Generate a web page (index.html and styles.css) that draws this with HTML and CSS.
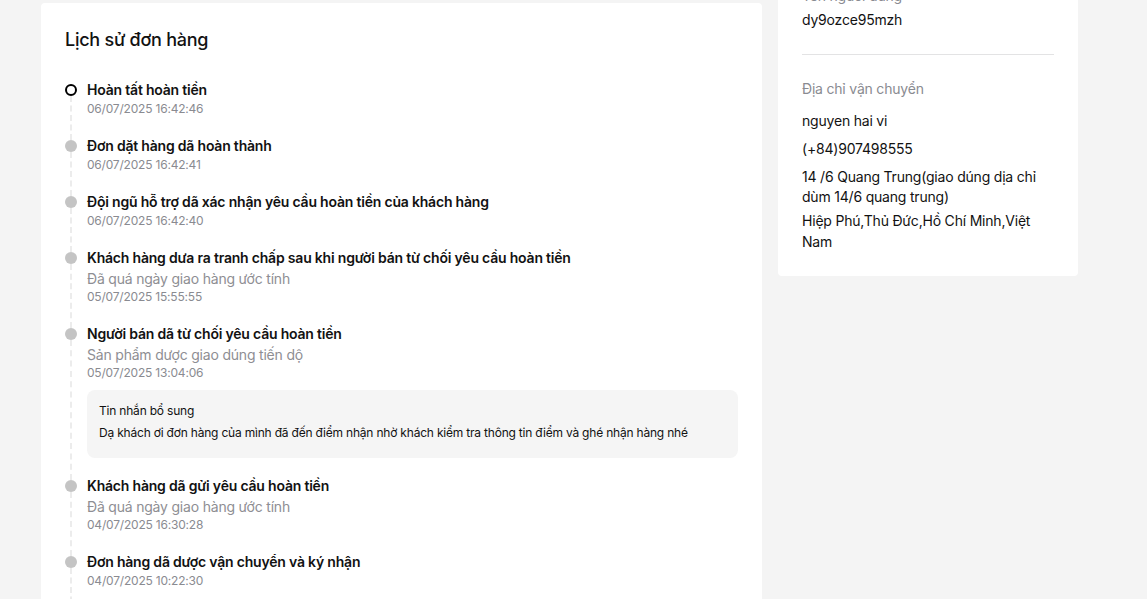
FILE: index.html
```html
<!DOCTYPE html>
<html lang="vi">
<head>
<meta charset="utf-8">
<title>Lịch sử đơn hàng</title>
<link rel="stylesheet" href="styles.css">
</head>
<body>
<div class="page">
  <section class="card history">
    <h2 class="history-title">Lịch sử đơn hàng</h2>
    <ol class="timeline">
      <li class="event current">
        <span class="dot"></span>
        <div class="event-title">Hoàn tất hoàn tiền</div>
        <div class="event-time">06/07/2025 16:42:46</div>
      </li>
      <li class="event">
        <span class="dot"></span>
        <div class="event-title">Đơn dặt hàng dã hoàn thành</div>
        <div class="event-time">06/07/2025 16:42:41</div>
      </li>
      <li class="event">
        <span class="dot"></span>
        <div class="event-title">Đội ngũ hỗ trợ dã xác nhận yêu cầu hoàn tiền của khách hàng</div>
        <div class="event-time">06/07/2025 16:42:40</div>
      </li>
      <li class="event">
        <span class="dot"></span>
        <div class="event-title">Khách hàng dưa ra tranh chấp sau khi người bán từ chối yêu cầu hoàn tiền</div>
        <div class="event-desc">Đã quá ngày giao hàng ước tính</div>
        <div class="event-time">05/07/2025 15:55:55</div>
      </li>
      <li class="event">
        <span class="dot"></span>
        <div class="event-title">Người bán dã từ chối yêu cầu hoàn tiền</div>
        <div class="event-desc">Sản phẩm dược giao dúng tiến dộ</div>
        <div class="event-time">05/07/2025 13:04:06</div>
        <div class="note">
          <p class="note-label">Tin nhắn bổ sung</p>
          <p class="note-text">Dạ khách ơi đơn hàng của mình đã đến điểm nhận nhờ khách kiểm tra thông tin điểm và ghé nhận hàng nhé</p>
        </div>
      </li>
      <li class="event">
        <span class="dot"></span>
        <div class="event-title">Khách hàng dã gửi yêu cầu hoàn tiền</div>
        <div class="event-desc">Đã quá ngày giao hàng ước tính</div>
        <div class="event-time">04/07/2025 16:30:28</div>
      </li>
      <li class="event">
        <span class="dot"></span>
        <div class="event-title">Đơn hàng dã dược vận chuyển và ký nhận</div>
        <div class="event-time">04/07/2025 10:22:30</div>
      </li>
      <li class="event">
        <span class="dot"></span>
        <div class="event-title">Đơn hàng dã dược giao cho dơn vị vận chuyển</div>
        <div class="event-time">03/07/2025 09:15:12</div>
      </li>
    </ol>
  </section>

  <aside class="card customer">
    <h3 class="customer-title">Thông tin khách hàng</h3>
    <div class="field">
      <div class="label">Tên người dùng</div>
      <div class="value">dy9ozce95mzh</div>
    </div>
    <hr class="divider">
    <div class="field address">
      <div class="label">Địa chỉ vận chuyển</div>
      <div class="value first">nguyen hai vi</div>
      <div class="value">(+84)907498555</div>
      <div class="value">14 /6 Quang Trung(giao dúng dịa chỉ dùm 14/6 quang trung)</div>
      <div class="value tight">Hiệp Phú,Thủ Đức,Hồ Chí Minh,Việt Nam</div>
    </div>
  </aside>
</div>
</body>
</html>
```

FILE: styles.css
```css
* { box-sizing: border-box; }

html, body {
  margin: 0;
  padding: 0;
  background: #f4f4f4;
  font-family: "Inter", "Noto Sans", sans-serif;
  letter-spacing: -0.2px;
  color: #121212;
  overflow: hidden;
}

.page {
  display: flex;
  align-items: flex-start;
  gap: 16px;
  padding: 3px 0 0 41px;
}

.card {
  background: #fff;
  border-radius: 4px;
}

/* ---------- history ---------- */
.history {
  width: 721px;
  padding: 24px;
}

.history-title {
  margin: 0 0 27px;
  font-size: 18px;
  line-height: 26px;
  font-weight: 500;
  letter-spacing: -0.25px;
}

.timeline {
  list-style: none;
  margin: 0;
  padding: 0;
}

.event {
  position: relative;
  padding-left: 22px;
  padding-bottom: 18px;
}

.event::before {
  content: "";
  position: absolute;
  left: 5px;
  top: 16px;
  bottom: -4px;
  border-left: 2px dashed #ececec;
}

.dot {
  position: absolute;
  left: 0;
  top: 4px;
  width: 12px;
  height: 12px;
  border-radius: 50%;
  background: #c4c4c4;
  z-index: 1;
}

.current .dot {
  background: #fff;
  border: 2px solid #000;
}

.event-title {
  font-size: 14px;
  line-height: 20px;
  font-weight: 600;
}

.event-desc {
  font-size: 14px;
  line-height: 20px;
  margin-top: 1px;
  margin-bottom: -1px;
  color: #8e8e93;
}

.event-time {
  font-size: 12px;
  line-height: 18px;
  color: #8a8b91;
}

.note {
  margin-top: 8px;
  background: #f5f5f5;
  border-radius: 8px;
  padding: 12px 12px 16px;
}

.note p {
  margin: 0;
  font-size: 12px;
  line-height: 18px;
  color: #121212;
}

.note-label { margin-bottom: 4px !important; }

/* ---------- customer ---------- */
.customer {
  width: 300px;
  margin-top: -81px;
  padding: 24px;
}

.customer-title {
  margin: 0 0 16px;
  font-size: 16px;
  line-height: 24px;
  font-weight: 600;
}

.label {
  font-size: 14px;
  line-height: 20px;
  color: #8a8b91;
}

.value {
  font-size: 14px;
  line-height: 20px;
  margin-top: 4px;
}

.address .value { margin-top: 8px; }
.address .value.first { margin-top: 12px; }
.address .value.tight { margin-top: 3px; line-height: 21px; }

.divider {
  margin: 24px 0;
  border: 0;
  border-top: 1px solid #e3e3e4;
}
```
